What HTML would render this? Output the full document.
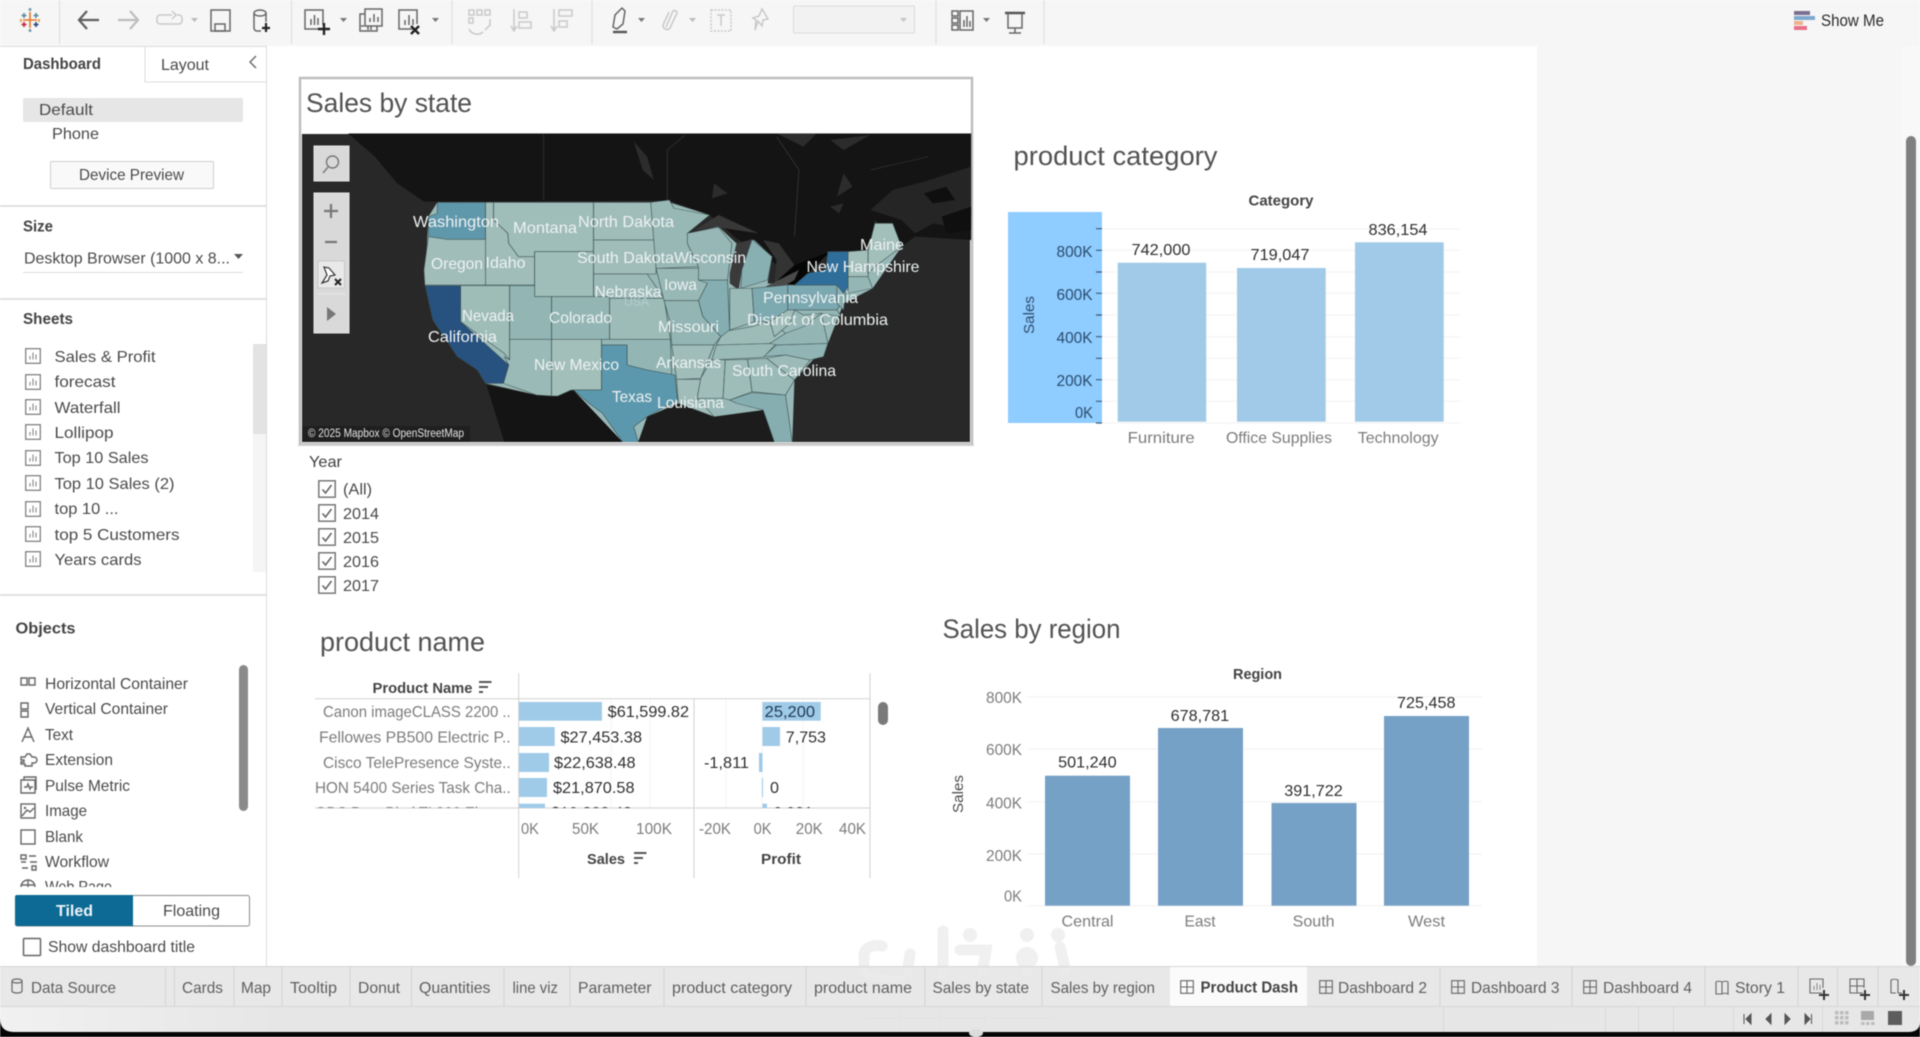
<!DOCTYPE html>
<html lang="en"><head><meta charset="utf-8"><title>Tableau Product Dash</title>
<style>
html,body{margin:0;padding:0;width:1920px;height:1037px;overflow:hidden;background:#fff}
svg{display:block;filter:blur(.45px)}
text{font-family:"Liberation Sans",sans-serif;font-size:16px;fill:#4a4a4a}
.b{font-weight:bold;fill:#444}
.t{font-size:27px;fill:#525252}
.g{fill:#7c7c7c}
.k{fill:#2f2f2f}
.tab{font-size:16px;fill:#5f5f5f}
.m{font-size:16px;fill:#eef2f2}
.ic{fill:none;stroke:#666;stroke-width:1.5}
.id{fill:none;stroke:#c9c9c9;stroke-width:1.5}
.ob{fill:none;stroke:#666;stroke-width:1.4}
.st{stroke:#3a4e4f;stroke-width:1.4;stroke-linejoin:round}
</style></head><body>
<svg width="1920" height="1037" viewBox="0 0 1920 1037" xmlns="http://www.w3.org/2000/svg">
<defs>
<symbol id="sh" viewBox="0 0 16 16" overflow="visible"><rect x=".7" y=".7" width="14.6" height="14.6" fill="#fff" stroke="#777" stroke-width="1.2"/><path d="M5 11.5V8M8 11.5V4.5M11 11.5V6.5" stroke="#888" stroke-width="1.1" fill="none"/></symbol>
<symbol id="db" viewBox="0 0 14 14" overflow="visible"><path d="M.7.7h12.6v12.6H.7zM7 .7v12.6M.7 7h12.6" fill="none" stroke="#666" stroke-width="1.1"/></symbol>
<symbol id="cb" viewBox="0 0 18 18" overflow="visible"><rect x=".8" y=".8" width="16.4" height="16.4" fill="#fff" stroke="#777" stroke-width="1.5"/><path d="M4.5 9.5l3 3.5 6-8" fill="none" stroke="#666" stroke-width="1.6"/></symbol>
<clipPath id="r5"><rect x="300" y="799" width="580" height="9"/></clipPath>
<clipPath id="web"><rect x="0" y="876" width="260" height="11"/></clipPath>
<clipPath id="mapc"><rect x="0" y="190" width="1526" height="926"/></clipPath>
</defs>

<rect width="1920" height="1037" fill="#fff"/>
<!-- toolbar -->
<rect width="1920" height="46" fill="#f5f6f5"/>
<path d="M59.5 0v44M291.5 0v44M452 0v44M592 0v44M936 0v44M1044 0v44" stroke="#dcdcdc" stroke-width="1"/>
<!-- logo -->
<g stroke-width="1.6" fill="none">
<path d="M30 12v16M23 20h14" stroke="#e8762c"/>
<path d="M24 13v5M21.500 15.500h5M36 13v5M33.500 15.500h5" stroke="#5b879b"/>
<path d="M24 22v5M21.500 24.500h5" stroke="#c72037"/>
<path d="M36 22v5M33.500 24.500h5" stroke="#1f447b"/>
<path d="M30 8v3M28.500 9.500h3M30 29v3M28.500 30.500h3" stroke="#7099a6"/>
<path d="M21 19v3M39 19v3" stroke="#eb912b"/>
</g>
<path d="M99 20H79M87 11l-8 9 8 9" fill="none" stroke="#5f5f5f" stroke-width="2.2"/>
<path d="M118 20h20M130 11l8 9-8 9" fill="none" stroke="#bdbdbd" stroke-width="2.2"/>
<path d="M172 15h-12a3 3 0 0 0-3 3v3a3 3 0 0 0 3 3h19a3 3 0 0 0 3-3v-3a3 3 0 0 0-3-3h-2M172 11l4 4-4 4" class="id"/>
<path d="M191 18h7l-3.500 4z" fill="#bbb"/>
<rect x="211" y="10" width="19" height="21" class="ic"/><rect x="215" y="24" width="10" height="7" class="ic"/>
<path d="M254 13a6 3 0 0 1 12 0v9M254 13v15a3 3 0 0 0 3 3h4M254 13a6 3 0 0 0 12 0" class="ic"/><path d="M266 23v9M262 28h8" stroke="#222" stroke-width="2.2"/>
<!-- new sheet -->
<path d="M319 29h-14V10h18v15" class="ic"/><path d="M311 25v-6M314.500 25v-10M318 25v-7" class="ic" stroke-width="1.2"/><path d="M324 23v12M318 29h12" stroke="#222" stroke-width="2.4"/>
<path d="M340 18h7l-3.500 4z" fill="#777"/>
<rect x="365" y="9" width="17" height="17" class="ic"/><path d="M370 22v-4M374 22v-8M378 22v-5" class="ic" stroke-width="1.200"/><path d="M365 14h-5v17h17v-5M361 26h3M368 26v4M371 26v4" class="ic"/>
<path d="M414 29h-15V10h18v14" class="ic"/><path d="M405 25v-5M409 25v-10M413 25v-6" class="ic" stroke-width="1.2"/><path d="M411 26l8 8M419 26l-8 8" stroke="#222" stroke-width="2.4"/>
<path d="M432 18h7l-3.500 4z" fill="#777"/>
<!-- disabled -->
<path d="M469 10h5v5h-5zM477 10h5v5h-5zM485 10h5v5h-5zM469 18h4v5h-4zM485 30l5-5M469 29a9 9 0 0 0 14 3M490 19v7" class="id" stroke-width="1.2"/>
<path d="M514 9v22M511 26l3 5 3-5M519 12h8v6h-8zM519 22h12v6h-12z" class="id"/>
<path d="M554 9v22M551 26l3 5 3-5M559 10h13v6h-13zM559 21h8v6h-8z" class="id"/>
<!-- highlight -->
<path d="M613 27l2-12 7-7 3 3-2 13-6 5z" class="ic"/><path d="M613 32h14" stroke="#555" stroke-width="2.4"/>
<path d="M638 18h7l-3.500 4z" fill="#777"/>
<path d="M666 27l7-16a2.500 2.500 0 0 1 4 2l-7 15a4 4 0 0 1-7-3l6-13" class="id"/>
<path d="M689 18h7l-3.500 4z" fill="#bbb"/>
<rect x="711" y="10" width="20" height="21" class="id" stroke-dasharray="2 1.500"/><path d="M717 15h8M721 15v11" class="id"/>
<path d="M762 9l6 10-5 1-1 6-4-5-3 9 1-10-3-2 6-2z" class="id"/>
<rect x="793.500" y="6" width="121" height="27" rx="1" fill="#f1f2f1" stroke="#dbdbdb"/>
<path d="M900 18h7l-3.500 4z" fill="#c4c4c4"/>
<!-- show cards -->
<path d="M952 11h6v5h-6zM952 18h6v5h-6zM952 25h6v5h-6zM960 11h13v19h-13z" class="ic" stroke-width="1.3"/><path d="M964 27v-7M967 27v-11M970 27v-6" class="ic" stroke-width="1.2"/>
<path d="M983 18h7l-3.500 4z" fill="#777"/>
<path d="M1005 13h20" stroke="#555" stroke-width="2.4"/><path d="M1008 13v15h14V13M1015 28v5M1009 33h12" class="ic"/>
<!-- show me -->
<rect x="1794" y="11" width="16" height="4" fill="#7b6f92"/><rect x="1794" y="16" width="21" height="4" fill="#7fa8cf"/><rect x="1794" y="21" width="9" height="4" fill="#edb28d"/><rect x="1794" y="26" width="13" height="4" fill="#ea7089"/>
<text x="1821" y="26" textLength="63" lengthAdjust="spacingAndGlyphs" style="fill:#2b2b2b;font-size:16.500px">Show Me</text>

<!-- right gray -->
<rect x="1537" y="46" width="383" height="921" fill="#f6f6f6"/>
<rect x="1901" y="46" width="19" height="921" fill="#f9f8f8"/>
<rect x="1906" y="136" width="10" height="830" rx="5" fill="#808080"/>

<!-- sidebar -->
<rect x="266" y="46" width="1" height="921" fill="#dcdcdc"/>
<path d="M145 46v36h121M0 46.500h266" fill="none" stroke="#dcdcdc"/>
<text class="b" x="23" y="69" textLength="78" lengthAdjust="spacingAndGlyphs">Dashboard</text>
<text x="161" y="70" textLength="48" lengthAdjust="spacingAndGlyphs">Layout</text>
<path d="M256 56l-6 6 6 6" fill="none" stroke="#666" stroke-width="1.4"/>
<rect x="23" y="98" width="220" height="24" rx="2" fill="#e6e6e6"/>
<text x="39" y="115" textLength="54" lengthAdjust="spacingAndGlyphs">Default</text>
<text x="52" y="139" textLength="47" lengthAdjust="spacingAndGlyphs">Phone</text>
<rect x="50.500" y="161.500" width="163" height="27" rx="1" fill="#f9f9f9" stroke="#cfcfcf"/>
<text x="79" y="180" textLength="105" lengthAdjust="spacingAndGlyphs">Device Preview</text>
<path d="M0 206h266M0 299h266M0 595h266" stroke="#d8d8d8" stroke-width="1.500"/>
<text class="b" x="23" y="231.500" textLength="30" lengthAdjust="spacingAndGlyphs">Size</text>
<text x="24" y="263.500" textLength="206" lengthAdjust="spacingAndGlyphs">Desktop Browser (1000 x 8...</text>
<path d="M234 254h9l-4.500 5z" fill="#555"/><path d="M23 272.500h220" stroke="#dcdcdc"/>
<text class="b" x="23" y="324" textLength="50" lengthAdjust="spacingAndGlyphs">Sheets</text>
<rect x="253" y="344" width="13" height="228" fill="#f5f5f5"/><rect x="253" y="344" width="13" height="90" fill="#e3e3e3"/>
<g>
<use href="#sh" x="25" y="348" width="16" height="16"/><text x="54.500" y="362" textLength="101" lengthAdjust="spacingAndGlyphs">Sales &amp; Profit</text>
<use href="#sh" x="25" y="374" width="16" height="16"/><text x="54.500" y="387" textLength="61" lengthAdjust="spacingAndGlyphs">forecast</text>
<use href="#sh" x="25" y="399" width="16" height="16"/><text x="54.500" y="413" textLength="66" lengthAdjust="spacingAndGlyphs">Waterfall</text>
<use href="#sh" x="25" y="424" width="16" height="16"/><text x="54.500" y="438" textLength="59" lengthAdjust="spacingAndGlyphs">Lollipop</text>
<use href="#sh" x="25" y="450" width="16" height="16"/><text x="54.500" y="463" textLength="94" lengthAdjust="spacingAndGlyphs">Top 10 Sales</text>
<use href="#sh" x="25" y="475" width="16" height="16"/><text x="54.500" y="489" textLength="120" lengthAdjust="spacingAndGlyphs">Top 10 Sales (2)</text>
<use href="#sh" x="25" y="501" width="16" height="16"/><text x="54.500" y="514" textLength="64" lengthAdjust="spacingAndGlyphs">top 10 ...</text>
<use href="#sh" x="25" y="526" width="16" height="16"/><text x="54.500" y="540" textLength="125" lengthAdjust="spacingAndGlyphs">top 5 Customers</text>
<use href="#sh" x="25" y="551" width="16" height="16"/><text x="54.500" y="565" textLength="87" lengthAdjust="spacingAndGlyphs">Years cards</text>
</g>
<text class="b" x="15.500" y="633.500" textLength="60" lengthAdjust="spacingAndGlyphs">Objects</text>
<rect x="239" y="665" width="9" height="146" rx="4.500" fill="#8a8a8a"/>
<g>
<path d="M21 678h6v7h-6zM29 678h6v7h-6z" class="ob"/><text x="45" y="689" textLength="143" lengthAdjust="spacingAndGlyphs">Horizontal Container</text>
<path d="M21 703h7v6h-7zM21 711h7v6h-7z" class="ob"/><text x="45" y="714" textLength="123" lengthAdjust="spacingAndGlyphs">Vertical Container</text>
<path d="M22 742l6-14 6 14M24 737h8" class="ob"/><text x="45" y="740" textLength="28" lengthAdjust="spacingAndGlyphs">Text</text>
<path d="M21 757h4l2-3h3l2 3h2a3 3 0 0 1 0 6h-2v3h-7v-2h-4v-2h3v-2h-3z" class="ob"/><text x="45" y="765" textLength="68" lengthAdjust="spacingAndGlyphs">Extension</text>
<path d="M21 780h14v13h-14zM24 780v-3h12v13" class="ob"/><path d="M24 787h3l1-3 2 5 1-2h2" class="ob" stroke-width="1"/><text x="45" y="791" textLength="85" lengthAdjust="spacingAndGlyphs">Pulse Metric</text>
<rect x="21" y="804" width="14" height="14" class="ob"/><path d="M22 816l5-6 3 2 4-4" class="ob" stroke-width="1.100"/><circle cx="25" cy="808" r="1.200" fill="#666"/><text x="45" y="816" textLength="42" lengthAdjust="spacingAndGlyphs">Image</text>
<rect x="21" y="830" width="14" height="14" class="ob"/><text x="45" y="842" textLength="38" lengthAdjust="spacingAndGlyphs">Blank</text>
<path d="M21 855h5v4h-5zM29 856h7M21 862h5M30 862h7M22 868h6M32 866h4v4h-4z" class="ob" stroke-width="1.100"/><text x="45" y="867" textLength="64" lengthAdjust="spacingAndGlyphs">Workflow</text>
<g clip-path="url(#web)"><circle cx="28" cy="887" r="7" class="ob"/><path d="M21 885h14M28 880v14" class="ob" stroke-width="1"/><text x="45" y="892" textLength="67" lengthAdjust="spacingAndGlyphs">Web Page</text></g>
</g>
<rect x="15.500" y="895.500" width="234" height="30.500" rx="2" fill="#fff" stroke="#8a8a8a"/>
<path d="M17 895h116v31H17a2 2 0 0 1-2-2v-27a2 2 0 0 1 2-2z" fill="#0c6a94"/>
<text x="56" y="916" textLength="37" lengthAdjust="spacingAndGlyphs" style="font-weight:bold;fill:#eef4f7">Tiled</text>
<text x="163" y="916" textLength="57" lengthAdjust="spacingAndGlyphs">Floating</text>
<rect x="23.500" y="938.500" width="17" height="17" rx="1" fill="#fff" stroke="#666" stroke-width="1.500"/>
<text x="48" y="952" textLength="147" lengthAdjust="spacingAndGlyphs">Show dashboard title</text>

<!-- Sales by state -->
<rect x="300" y="78" width="672" height="366" fill="#fff" stroke="#bdbdbd" stroke-width="2.500"/>
<rect x="298" y="444" width="676" height="2" fill="#d0d0d0"/>
<text class="t" x="306" y="112" textLength="166" lengthAdjust="spacingAndGlyphs">Sales by state</text>
<rect x="302" y="134" width="668" height="308" fill="#282828"/>
<g transform="translate(290,70) scale(.44643,.33333)" clip-path="url(#mapc)">
<!-- canada -->
<path d="M130 190L190 260 240 340 300 395 850 392 940 435 1000 505 1130 620 1205 545 1300 540 1310 450 1370 530 1400 500 1526 510V190z" fill="#141414"/>
<path d="M568 190V390" stroke="#303030" stroke-width="2" fill="none"/>
<path d="M845 240L885 195M845 240V390M1090 200L1140 300 1130 500M1300 300L1430 260" fill="none" stroke="#333" stroke-width="2"/>
<path d="M770 215L800 260 815 330 790 300zM1090 190L1150 230 1180 190zM1210 210L1300 195 1240 240zM1240 310L1260 350 1225 380zM950 340L980 370 945 385zM1210 410L1240 400 1230 430z" fill="#2c2c2c"/>
<path d="M1300 420L1350 360 1420 335 1526 290V440L1480 470 1440 460 1400 490 1370 450z" fill="#252525"/>
<path d="M1420 370L1470 350 1490 390 1440 400zM1460 440L1526 410V480L1470 490z" fill="#0f0f0f"/>
<path d="M1100 600L1210 545 1130 650 1070 665z" fill="#060606"/>
<!-- mexico & gulf -->
<path d="M440 945L552 975 635 960 745 1116H480z" fill="#141414"/>
<path d="M780 1116L800 1040 870 1000 950 1040 1060 1020 1085 1116z" fill="#1c1c1c"/>
<!-- base US -->
<path d="M330 397H850L940 435 890 490 960 470 1000 520 1040 510 1080 560 1070 640 1130 645 1200 600 1205 545H1295L1310 460H1350L1370 530 1305 655 1240 700 1205 820 1130 930 1125 1116H1085L1060 1020 950 1040 870 1000 800 1040 780 1116H745L635 960 552 975 438 940 302 645 310 440z" fill="#97b8b6"/>
<!-- lakes -->
<path d="M905 482L960 435 1050 490 990 478 950 470z" fill="#383838"/>
<path d="M985 610L1000 520 1035 508 1012 600 1005 660 985 640z" fill="#3a3a3a"/>
<path d="M1060 510L1095 520 1130 585 1085 640 1090 570z" fill="#333"/>
<path d="M1065 650L1140 600 1130 630 1085 665z" fill="#4a4a4a"/>
<g class="st">
<path fill="#5f97ab" d="M330 397H438V508L350 508 310 500 310 440 330 430z"/>
<path fill="#a0bdb9" d="M310 500L350 508H438L446 530 438 645H302L300 600z"/>
<path fill="#a0bdb9" d="M438 397H456V450L488 490 490 520 512 560H548V645H438z"/>
<path fill="#9fbdb9" d="M456 397H680V545H548V560H512L490 520 488 490 456 450z"/>
<path fill="#9fbdb9" d="M548 545H680V680H548z"/>
<path fill="#9fbdb7" d="M382 647H492V870L480 850 382 755z"/>
<path fill="#93b5b4" d="M492 647H548V680H586V808H492z"/>
<path fill="#9abab7" d="M492 808H586V978L552 975 478 940 490 885 480 860 492 870z"/>
<path fill="#93b6b4" d="M586 680H716V808H586z"/>
<path fill="#a3bfba" d="M586 808H698V960H630L600 978H586z"/>
<path fill="#a0bdb9" d="M680 397H808L820 510H680z"/>
<path fill="#a0bdb9" d="M680 510H820V612H680z"/>
<path fill="#9cbbb8" d="M680 612H800L838 685H716V680H680z"/>
<path fill="#9dbcb8" d="M716 685H838L852 808H716z"/>
<path fill="#93b6b4" d="M698 808H852L855 915 800 900 755 885V825H698z"/>
<path fill="#5c98ad" d="M698 825H755V885L800 900 862 915 868 990 800 1040 770 1070 780 1116H745L700 1030 670 1000 635 960H698z"/>
<path fill="#98b8b6" d="M808 397L850 390 860 415 940 435 890 490V520L915 590 820 595z"/>
<path fill="#98b8b6" d="M820 595H915L935 640 915 692H838z"/>
<path fill="#93b5b4" d="M838 692H915L925 740 965 800 950 825H855L852 760z"/>
<path fill="#a0bdb9" d="M855 825H950L920 925 866 928z"/>
<path fill="#a0bdb9" d="M866 928H920L912 985 950 1040 870 1000z"/>
<path fill="#a0bdb9" d="M945 868L975 870 970 985H912L920 925z"/>
<path fill="#9ebcb8" d="M975 870L1025 868 1035 965 985 990 970 985z"/>
<path fill="#9abab7" d="M1025 868L1068 865 1130 930 1110 975 1035 965z"/>
<path fill="#86aeb1" d="M985 990L1035 968 1110 975 1125 1116H1085L1060 1020 1000 1000z"/>
<path fill="#9cbbb8" d="M1068 865L1110 855 1165 870 1130 930z"/>
<path fill="#91b4b4" d="M1060 860L1090 825 1205 820 1195 860 1165 870 1110 855z"/>
<path fill="#9abab7" d="M955 825L1090 820 1060 862 945 870z"/>
<path fill="#9dbcb8" d="M970 785L1035 770 1075 755 1110 790 1080 820 955 825 965 800z"/>
<path fill="#84aeb1" d="M915 630H980L985 780 965 800 925 740 915 692 935 640z"/>
<path fill="#96b7b6" d="M890 490L960 472 990 520 980 630H915V590L890 520z"/>
<path fill="#88afb2" d="M1012 600L1035 508 1080 560 1070 630 1010 655z"/>
<path fill="#9abab7" d="M985 655H1035L1040 755 985 780z"/>
<path fill="#7da9b0" d="M1035 655L1115 645V720L1075 755H1040z"/>
<path fill="#7ca8b1" d="M1115 645H1225L1240 690 1225 720H1115z"/>
<path fill="#a0bdb9" d="M1075 755L1115 720H1130L1120 760 1085 800z"/>
<path fill="#93b5b4" d="M1075 820L1110 790 1150 770 1190 730 1205 820 1090 825z"/>
<path fill="#93b5b4" d="M1130 720H1225L1235 740 1190 730 1150 735z"/>
<path fill="#88afb2" d="M1225 645L1245 670 1240 720 1225 700z"/>
<path fill="#2f6e9b" d="M1130 645L1160 610 1200 600 1205 545H1250V650L1240 670 1225 645z"/>
<path fill="#a3bfba" d="M1250 545L1295 540V620H1250z"/>
<path fill="#a3bfba" d="M1295 540L1310 460H1350L1370 530 1310 590 1295 610z"/>
<path fill="#94b6b5" d="M1250 620H1295L1305 655 1250 670z"/>
<path fill="#27517f" d="M303 647H382V755L490 885 478 940H438L420 900 375 860 320 750z"/>
</g>
</g>
<rect x="302" y="426" width="168" height="16" fill="#1f1f1f"/>
<text x="308" y="437" textLength="156" lengthAdjust="spacingAndGlyphs" style="font-size:11.500px;fill:#e4e4e4">© 2025 Mapbox © OpenStreetMap</text>
<text x="624" y="306" textLength="25" lengthAdjust="spacingAndGlyphs" style="font-size:13px;fill:#b3cccb">USA</text>
<g>
<text class="m" x="413" y="227" textLength="86" lengthAdjust="spacingAndGlyphs">Washington</text>
<text class="m" x="513" y="233" textLength="64" lengthAdjust="spacingAndGlyphs">Montana</text>
<text class="m" x="578" y="227" textLength="96" lengthAdjust="spacingAndGlyphs">North Dakota</text>
<text class="m" x="577" y="263" textLength="97" lengthAdjust="spacingAndGlyphs">South Dakota</text>
<text class="m" x="674" y="263" textLength="72" lengthAdjust="spacingAndGlyphs">Wisconsin</text>
<text class="m" x="431" y="269" textLength="52" lengthAdjust="spacingAndGlyphs">Oregon</text>
<text class="m" x="485.500" y="268" textLength="40" lengthAdjust="spacingAndGlyphs">Idaho</text>
<text class="m" x="806.500" y="272" textLength="113" lengthAdjust="spacingAndGlyphs">New Hampshire</text>
<text class="m" x="860" y="250" textLength="44" lengthAdjust="spacingAndGlyphs">Maine</text>
<text class="m" x="664" y="290" textLength="33" lengthAdjust="spacingAndGlyphs">Iowa</text>
<text class="m" x="594.500" y="297" textLength="67" lengthAdjust="spacingAndGlyphs">Nebraska</text>
<text class="m" x="763" y="303" textLength="95" lengthAdjust="spacingAndGlyphs">Pennsylvania</text>
<text class="m" x="747" y="325" textLength="141" lengthAdjust="spacingAndGlyphs">District of Columbia</text>
<text class="m" x="462" y="321" textLength="52" lengthAdjust="spacingAndGlyphs">Nevada</text>
<text class="m" x="549" y="323" textLength="63" lengthAdjust="spacingAndGlyphs">Colorado</text>
<text class="m" x="658" y="332" textLength="61" lengthAdjust="spacingAndGlyphs">Missouri</text>
<text class="m" x="428" y="342" textLength="69" lengthAdjust="spacingAndGlyphs">California</text>
<text class="m" x="534" y="370" textLength="85" lengthAdjust="spacingAndGlyphs">New Mexico</text>
<text class="m" x="656" y="368" textLength="65" lengthAdjust="spacingAndGlyphs">Arkansas</text>
<text class="m" x="732" y="376" textLength="104" lengthAdjust="spacingAndGlyphs">South Carolina</text>
<text class="m" x="612" y="402" textLength="40" lengthAdjust="spacingAndGlyphs">Texas</text>
<text class="m" x="657" y="408" textLength="67" lengthAdjust="spacingAndGlyphs">Louisiana</text>
</g>
<!-- map controls -->
<rect x="314" y="146" width="35" height="35" fill="#d9d9d9" stroke="#e6e6e6"/>
<circle cx="332.500" cy="162" r="6" fill="none" stroke="#777" stroke-width="1.400"/><path d="M328 167l-5 6" stroke="#777" stroke-width="1.400"/>
<rect x="314" y="193" width="35" height="140" fill="#d9d9d9" stroke="#e6e6e6"/>
<path d="M331 204v14M324 211h14M325 242h12" stroke="#777" stroke-width="2.200"/>
<rect x="318" y="261" width="26.500" height="27" fill="#e9e9e9" stroke="#c8c8c8"/>
<path d="M322 283l5-8-3-8 5 1 6 7-5 1-2 5z" fill="#fff" stroke="#333" stroke-width="1.200"/><path d="M335 279l6 6M341 279l-6 6" stroke="#222" stroke-width="2"/>
<path d="M318 294h27" stroke="#e9e9e9"/><path d="M327 307l9 7-9 7z" fill="#777"/>

<!-- Year filter -->
<text x="309" y="467" textLength="33" lengthAdjust="spacingAndGlyphs" style="fill:#3f3f3f">Year</text>
<use href="#cb" x="318" y="480" width="18" height="18"/><text x="343" y="494.500" textLength="29" lengthAdjust="spacingAndGlyphs">(All)</text>
<use href="#cb" x="318" y="504" width="18" height="18"/><text x="343" y="519" textLength="36" lengthAdjust="spacingAndGlyphs">2014</text>
<use href="#cb" x="318" y="528" width="18" height="18"/><text x="343" y="543" textLength="36" lengthAdjust="spacingAndGlyphs">2015</text>
<use href="#cb" x="318" y="552" width="18" height="18"/><text x="343" y="567" textLength="36" lengthAdjust="spacingAndGlyphs">2016</text>
<use href="#cb" x="318" y="576" width="18" height="18"/><text x="343" y="591" textLength="36" lengthAdjust="spacingAndGlyphs">2017</text>

<!-- product category -->
<text class="t" x="1013.500" y="165" textLength="204" lengthAdjust="spacingAndGlyphs">product category</text>
<text class="b" x="1248.500" y="205.500" textLength="65" lengthAdjust="spacingAndGlyphs" style="font-size:15px">Category</text>
<rect x="1008" y="212" width="94" height="211" fill="#8fccff"/>
<path d="M1102 228.700h358M1102 250.300h358M1102 272h358M1102 293.300h358M1102 315h358M1102 336.700h358M1102 358.300h358M1102 379.700h358M1102 401.300h358M1102 423h358" stroke="#f2f2f2"/>
<path d="M1096 228.700h6M1096 250.300h6M1096 272h6M1096 293.300h6M1096 315h6M1096 336.700h6M1096 358.300h6M1096 379.700h6M1096 401.300h6M1096 423h6" stroke="#3c5a75" stroke-width="1.200"/>
<text x="1056.500" y="257" textLength="36" lengthAdjust="spacingAndGlyphs" style="fill:#2a4c6e">800K</text>
<text x="1056.500" y="300" textLength="36" lengthAdjust="spacingAndGlyphs" style="fill:#2a4c6e">600K</text>
<text x="1056.500" y="343" textLength="36" lengthAdjust="spacingAndGlyphs" style="fill:#2a4c6e">400K</text>
<text x="1056.500" y="386" textLength="36" lengthAdjust="spacingAndGlyphs" style="fill:#2a4c6e">200K</text>
<text x="1075" y="418" textLength="18" lengthAdjust="spacingAndGlyphs" style="fill:#2a4c6e">0K</text>
<text transform="translate(1034,334) rotate(-90)" textLength="38" lengthAdjust="spacingAndGlyphs" style="fill:#2d4d6b;font-size:15px">Sales</text>
<rect x="1117.700" y="262.700" width="88.500" height="159" fill="#a0cae8"/>
<rect x="1237" y="268" width="88.700" height="153.700" fill="#a0cae8"/>
<rect x="1355" y="242.300" width="88.700" height="179.400" fill="#a0cae8"/>
<text class="k" x="1131.500" y="255" textLength="59" lengthAdjust="spacingAndGlyphs">742,000</text>
<text class="k" x="1250.500" y="260" textLength="59" lengthAdjust="spacingAndGlyphs">719,047</text>
<text class="k" x="1368.500" y="235" textLength="59" lengthAdjust="spacingAndGlyphs">836,154</text>
<text class="g" x="1127.700" y="443" textLength="67" lengthAdjust="spacingAndGlyphs">Furniture</text>
<text class="g" x="1226" y="443" textLength="106" lengthAdjust="spacingAndGlyphs">Office Supplies</text>
<text class="g" x="1357.700" y="443" textLength="81" lengthAdjust="spacingAndGlyphs">Technology</text>

<!-- product name -->
<text class="t" x="320" y="651" textLength="165" lengthAdjust="spacingAndGlyphs">product name</text>
<text class="b" x="372.500" y="693" textLength="100" lengthAdjust="spacingAndGlyphs" style="font-size:15px">Product Name</text>
<path d="M479 682h12.500M479 687h9M479 692h4" stroke="#555" stroke-width="2"/>
<path d="M611 698v110M650 698v110M726 698v110M762 698v110M803 698v110" stroke="#f5f5f5"/>
<path d="M518.700 673v205M694 698v180M870 673v205" stroke="#d3d3d3"/>
<path d="M315 698.700h555M315 808h555" stroke="#d3d3d3"/>
<rect x="519" y="702" width="83" height="18.700" fill="#9fcae8"/>
<rect x="519" y="727" width="35.700" height="19" fill="#9fcae8"/>
<rect x="519" y="753" width="30" height="19" fill="#9fcae8"/>
<rect x="519" y="778" width="28" height="19" fill="#9fcae8"/>
<rect x="519" y="803.700" width="26" height="4.300" fill="#9fcae8"/>
<rect x="762.500" y="702" width="58.200" height="18.700" fill="#9fcae8"/>
<rect x="762.500" y="727" width="17.500" height="19" fill="#9fcae8"/>
<rect x="759" y="753" width="3.500" height="19" fill="#9fcae8"/>
<rect x="762" y="778" width="1" height="19" fill="#9fcae8"/>
<rect x="762.500" y="803.700" width="4.500" height="4.300" fill="#9fcae8"/>
<text class="g" x="323" y="717" textLength="187.700" lengthAdjust="spacingAndGlyphs">Canon imageCLASS 2200 ..</text>
<text class="g" x="319" y="742.500" textLength="191.700" lengthAdjust="spacingAndGlyphs">Fellowes PB500 Electric P..</text>
<text class="g" x="323" y="768" textLength="187.700" lengthAdjust="spacingAndGlyphs">Cisco TelePresence Syste..</text>
<text class="g" x="315" y="793" textLength="195.700" lengthAdjust="spacingAndGlyphs">HON 5400 Series Task Cha..</text>
<g clip-path="url(#r5)"><text class="g" x="315" y="818" textLength="195" lengthAdjust="spacingAndGlyphs">GBC DocuBind TL300 Electr..</text><text class="k" x="551" y="818" textLength="81" lengthAdjust="spacingAndGlyphs">$19,823.48</text><text class="k" x="773" y="818" textLength="40" lengthAdjust="spacingAndGlyphs">6,931</text></g>
<text class="k" x="607.700" y="717" textLength="81.300" lengthAdjust="spacingAndGlyphs">$61,599.82</text>
<text class="k" x="560.500" y="742.500" textLength="81.500" lengthAdjust="spacingAndGlyphs">$27,453.38</text>
<text class="k" x="554" y="768" textLength="81.600" lengthAdjust="spacingAndGlyphs">$22,638.48</text>
<text class="k" x="553" y="793" textLength="81.500" lengthAdjust="spacingAndGlyphs">$21,870.58</text>
<text x="764.700" y="717" textLength="50.300" lengthAdjust="spacingAndGlyphs" style="fill:#1e3a52">25,200</text>
<text class="k" x="785.800" y="742.500" textLength="40.200" lengthAdjust="spacingAndGlyphs">7,753</text>
<text class="k" x="704" y="768" textLength="45" lengthAdjust="spacingAndGlyphs">-1,811</text>
<text class="k" x="770" y="793" textLength="9" lengthAdjust="spacingAndGlyphs">0</text>
<rect x="878" y="702" width="10" height="23" rx="5" fill="#7a7a7a"/>
<text class="g" x="521" y="834" textLength="18" lengthAdjust="spacingAndGlyphs">0K</text>
<text class="g" x="572" y="834" textLength="27" lengthAdjust="spacingAndGlyphs">50K</text>
<text class="g" x="636" y="834" textLength="36" lengthAdjust="spacingAndGlyphs">100K</text>
<text class="g" x="699" y="834" textLength="32" lengthAdjust="spacingAndGlyphs">-20K</text>
<text class="g" x="753.600" y="834" textLength="18" lengthAdjust="spacingAndGlyphs">0K</text>
<text class="g" x="795.800" y="834" textLength="27" lengthAdjust="spacingAndGlyphs">20K</text>
<text class="g" x="839" y="834" textLength="27" lengthAdjust="spacingAndGlyphs">40K</text>
<text class="b" x="587" y="864" textLength="38" lengthAdjust="spacingAndGlyphs" style="font-size:15px">Sales</text>
<path d="M634 853h12.500M634 858h9M634 863h4" stroke="#555" stroke-width="2"/>
<text class="b" x="761" y="864" textLength="40" lengthAdjust="spacingAndGlyphs" style="font-size:15px">Profit</text>

<!-- Sales by region -->
<text class="t" x="942.500" y="638" textLength="178" lengthAdjust="spacingAndGlyphs">Sales by region</text>
<text class="b" x="1233" y="679" textLength="49" lengthAdjust="spacingAndGlyphs" style="font-size:15px">Region</text>
<path d="M1028 696.700h454M1028 749h454M1028 801.700h454M1028 854h454M1028 905.700h454" stroke="#f1f1f1"/>
<text class="g" x="986" y="703" textLength="36" lengthAdjust="spacingAndGlyphs">800K</text>
<text class="g" x="986" y="755" textLength="36" lengthAdjust="spacingAndGlyphs">600K</text>
<text class="g" x="986" y="808.500" textLength="36" lengthAdjust="spacingAndGlyphs">400K</text>
<text class="g" x="986" y="861" textLength="36" lengthAdjust="spacingAndGlyphs">200K</text>
<text class="g" x="1004" y="901.700" textLength="18" lengthAdjust="spacingAndGlyphs">0K</text>
<text transform="translate(963,813) rotate(-90)" textLength="38" lengthAdjust="spacingAndGlyphs" style="fill:#4c4c4c;font-size:15px">Sales</text>
<rect x="1045" y="775.700" width="85" height="130" fill="#76a1c6"/>
<rect x="1158" y="728" width="85" height="177.700" fill="#76a1c6"/>
<rect x="1271.500" y="803" width="85" height="102.700" fill="#76a1c6"/>
<rect x="1384" y="716" width="85" height="189.700" fill="#76a1c6"/>
<text class="k" x="1058.200" y="767.700" textLength="58.500" lengthAdjust="spacingAndGlyphs">501,240</text>
<text class="k" x="1170.700" y="721" textLength="58.500" lengthAdjust="spacingAndGlyphs">678,781</text>
<text class="k" x="1284.300" y="796" textLength="58.500" lengthAdjust="spacingAndGlyphs">391,722</text>
<text class="k" x="1397" y="708" textLength="58.500" lengthAdjust="spacingAndGlyphs">725,458</text>
<text class="g" x="1061.500" y="926.700" textLength="52" lengthAdjust="spacingAndGlyphs">Central</text>
<text class="g" x="1184.500" y="926.700" textLength="31" lengthAdjust="spacingAndGlyphs">East</text>
<text class="g" x="1292.600" y="926.700" textLength="42" lengthAdjust="spacingAndGlyphs">South</text>
<text class="g" x="1408" y="926.700" textLength="37" lengthAdjust="spacingAndGlyphs">West</text>

<!-- watermark -->
<g fill="none" stroke="#f0f0f0" stroke-width="11" stroke-linecap="round">
<path d="M882 946c-10-2-18 2-18 10v12M910 954l-2 14M943 931v37M960 950h26l-3 18M1060 947l5 21"/>
</g>
<g fill="#f0f0f0"><circle cx="970" cy="935" r="7"/><circle cx="1027" cy="935" r="7"/><circle cx="1058" cy="935" r="7"/><circle cx="1027" cy="958" r="11"/></g>

<!-- bottom bars -->
<rect x="0" y="967" width="1920" height="39" fill="#e8e8e8"/>
<path d="M0 966.500h1920M0 1006.500h1920" stroke="#d6d6d6"/>
<defs><linearGradient id="bg" x1="0" y1="0" x2="1" y2="0"><stop offset="0" stop-color="#f1f1f1"/><stop offset=".15" stop-color="#e6e6e6"/><stop offset="1" stop-color="#e7e7e7"/></linearGradient></defs>
<rect x="0" y="1007" width="1920" height="25" fill="url(#bg)"/>
<g fill="none" stroke="#e3e3e3" stroke-width="1"><path d="M864 1018h190M900 1012v16M940 1012v16M985 1012v16"/></g>
<g fill="none" stroke="#eaeaea" stroke-width="9"><path d="M864 968c0 10 20 12 40 12M908 968v8M943 968v12M983 968v8M1027 968v8M1065 968v6"/></g>
<path d="M165.500 967v39M174.500 967v39M234 967v39M282 967v39M350 967v39M411.500 967v39M504 967v39M570 967v39M664 967v39M806 967v39M925 967v39M1042 967v39M1440 967v39M1572 967v39M1705 967v39M1798 967v39M1837.500 967v39M1878 967v39" stroke="#d4d4d4"/>
<rect x="1170" y="967" width="137" height="39" fill="#fbfbfb"/>
<path d="M12 981a5 2 0 0 1 10 0v10a5 2 0 0 1-10 0zM12 981a5 2 0 0 0 10 0" fill="none" stroke="#666" stroke-width="1.200"/>
<g>
<text class="tab" x="31" y="993" textLength="85" lengthAdjust="spacingAndGlyphs">Data Source</text>
<text class="tab" x="182" y="993" textLength="41" lengthAdjust="spacingAndGlyphs">Cards</text>
<text class="tab" x="241" y="993" textLength="30" lengthAdjust="spacingAndGlyphs">Map</text>
<text class="tab" x="290" y="993" textLength="47" lengthAdjust="spacingAndGlyphs">Tooltip</text>
<text class="tab" x="358" y="993" textLength="42" lengthAdjust="spacingAndGlyphs">Donut</text>
<text class="tab" x="419" y="993" textLength="71.500" lengthAdjust="spacingAndGlyphs">Quantities</text>
<text class="tab" x="512.500" y="993" textLength="45.500" lengthAdjust="spacingAndGlyphs">line viz</text>
<text class="tab" x="578" y="993" textLength="73.500" lengthAdjust="spacingAndGlyphs">Parameter</text>
<text class="tab" x="672" y="993" textLength="120" lengthAdjust="spacingAndGlyphs">product category</text>
<text class="tab" x="814" y="993" textLength="98" lengthAdjust="spacingAndGlyphs">product name</text>
<rect x="866" y="980" width="7" height="5" fill="#e8e8e8"/>
<text class="tab" x="932.500" y="993" textLength="96.500" lengthAdjust="spacingAndGlyphs">Sales by state</text>
<text class="tab" x="1050.500" y="993" textLength="104.500" lengthAdjust="spacingAndGlyphs">Sales by region</text>
<use href="#db" x="1180" y="980" width="14" height="14"/>
<text class="b" x="1200.500" y="992.500" textLength="97.500" lengthAdjust="spacingAndGlyphs">Product Dash</text>
<use href="#db" x="1319" y="980" width="14" height="14"/>
<text class="tab" x="1338" y="993" textLength="89" lengthAdjust="spacingAndGlyphs">Dashboard 2</text>
<use href="#db" x="1451" y="980" width="14" height="14"/>
<text class="tab" x="1471" y="993" textLength="88.500" lengthAdjust="spacingAndGlyphs">Dashboard 3</text>
<use href="#db" x="1583" y="980" width="14" height="14"/>
<text class="tab" x="1603" y="993" textLength="89" lengthAdjust="spacingAndGlyphs">Dashboard 4</text>
<path d="M1722 982c-2-1-5-1-6 0v12h6c1-1 5-1 6 0v-12c-1-1-4-1-6 0zM1722 982v12" fill="none" stroke="#666" stroke-width="1.100"/>
<text class="tab" x="1735" y="993" textLength="50" lengthAdjust="spacingAndGlyphs">Story 1</text>
</g>
<path d="M1822 993h-12v-14h13v9" fill="none" stroke="#666" stroke-width="1.100"/><path d="M1814 990v-4M1817 990v-7M1820 990v-5" stroke="#888"/><path d="M1824 990v10M1819 995h10" stroke="#333" stroke-width="2"/>
<path d="M1863 993h-13v-14h14v9M1857 979v14M1850 986h14" fill="none" stroke="#666" stroke-width="1.100"/><path d="M1865 990v10M1860 995h10" stroke="#333" stroke-width="2"/>
<path d="M1902 993h-4v-13c-2-1-5-1-7 0v13h5M1898 980v13" fill="none" stroke="#666" stroke-width="1.100"/><path d="M1904 990v10M1899 995h10" stroke="#333" stroke-width="2"/>
<!-- status bar -->
<path d="M1443.500 1007v25M1605.500 1007v25M1638.500 1007v25M1673.500 1007v25M1733.500 1007v25M1822.500 1007v25" stroke="#d8d8d8"/>
<path d="M1744 1014v10M1751 1014l-5 5 5 5zM1771 1014l-5 5 5 5zM1785 1014l5 5-5 5zM1805 1014l5 5-5 5zM1811.500 1014v10" fill="#555" stroke="#555" stroke-width="1"/>
<g fill="#bdbdbd"><rect x="1835" y="1011" width="3.500" height="3.500"/><rect x="1840" y="1011" width="3.500" height="3.500"/><rect x="1845" y="1011" width="3.500" height="3.500"/><rect x="1835" y="1016" width="3.500" height="3.500"/><rect x="1840" y="1016" width="3.500" height="3.500"/><rect x="1845" y="1016" width="3.500" height="3.500"/><rect x="1835" y="1021" width="3.500" height="3.500"/><rect x="1840" y="1021" width="3.500" height="3.500"/><rect x="1845" y="1021" width="3.500" height="3.500"/><rect x="1861" y="1011" width="13" height="9" fill="#a9a9a9"/><rect x="1861" y="1022" width="3.500" height="3"/><rect x="1866" y="1022" width="3.500" height="3"/><rect x="1871" y="1022" width="3.500" height="3"/></g>
<rect x="1888" y="1011" width="14" height="14" fill="#5d5d5d"/>
<!-- black bezel -->
<rect x="0" y="1032" width="1920" height="5" fill="#050505"/>
<ellipse cx="976" cy="1033" rx="7" ry="4" fill="#dcdcdc"/>
<path d="M0 1018Q0 1032 14 1032H0zM1920 1022Q1920 1032 1908 1032H1920z" fill="#050505"/>
</svg>
</body></html>
